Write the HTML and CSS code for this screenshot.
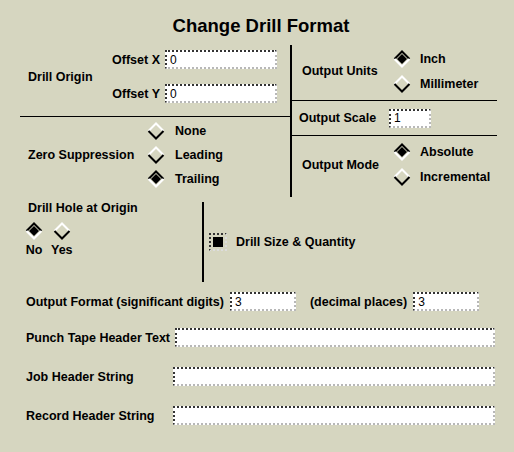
FILE: index.html
```html
<!DOCTYPE html>
<html>
<head>
    <title>Change Drill Format</title>
    <link rel="stylesheet" href="styles.css">
</head>
<body>
    <div class="dialog">
        <h1 class="title">Change Drill Format</h1>

        <div class="top">
            <!-- left column: origin + zero suppression -->
            <div class="col-left">
                <div class="origin">
                    <span class="origin-lbl">Drill Origin</span>
                    <span class="sub-lbl">Offset X</span>
                    <input class="field w-offset" type="text" value="0">
                    <span class="sub-lbl">Offset Y</span>
                    <input class="field w-offset" type="text" value="0">
                </div>
                <div class="zero">
                    <span class="zero-lbl">Zero Suppression</span>
                    <div class="radios">
                        <div class="radio">
                            <svg class="dia" viewBox="0 0 18 18" width="18" height="18"><path class="hi" d="M1.5 9L9 1.5L16.5 9"/><path class="lo" d="M1.5 9L9 16.5L16.5 9"/></svg>
                            <span>None</span>
                        </div>
                        <div class="radio">
                            <svg class="dia" viewBox="0 0 18 18" width="18" height="18"><path class="hi" d="M1.5 9L9 1.5L16.5 9"/><path class="lo" d="M1.5 9L9 16.5L16.5 9"/></svg>
                            <span>Leading</span>
                        </div>
                        <div class="radio">
                            <svg class="dia" viewBox="0 0 18 18" width="18" height="18"><path class="lo" d="M1.5 9L9 1.5L16.5 9"/><path class="hi" d="M1.5 9L9 16.5L16.5 9"/><path class="dot" d="M4 9L9 4L14 9L9 14Z"/></svg>
                            <span>Trailing</span>
                        </div>
                    </div>
                </div>
            </div>

            <!-- right column: units, scale, mode -->
            <div class="col-right">
                <div class="units">
                    <span class="sec-lbl">Output Units</span>
                    <div class="radios rows-25">
                        <div class="radio">
                            <svg class="dia" viewBox="0 0 18 18" width="18" height="18"><path class="lo" d="M1.5 9L9 1.5L16.5 9"/><path class="hi" d="M1.5 9L9 16.5L16.5 9"/><path class="dot" d="M4 9L9 4L14 9L9 14Z"/></svg>
                            <span>Inch</span>
                        </div>
                        <div class="radio">
                            <svg class="dia" viewBox="0 0 18 18" width="18" height="18"><path class="hi" d="M1.5 9L9 1.5L16.5 9"/><path class="lo" d="M1.5 9L9 16.5L16.5 9"/></svg>
                            <span>Millimeter</span>
                        </div>
                    </div>
                </div>
                <div class="scale">
                    <span class="scale-lbl">Output Scale</span>
                    <input class="field w-scale" type="text" value="1">
                </div>
                <div class="mode">
                    <span class="sec-lbl">Output Mode</span>
                    <div class="radios rows-25">
                        <div class="radio">
                            <svg class="dia" viewBox="0 0 18 18" width="18" height="18"><path class="lo" d="M1.5 9L9 1.5L16.5 9"/><path class="hi" d="M1.5 9L9 16.5L16.5 9"/><path class="dot" d="M4 9L9 4L14 9L9 14Z"/></svg>
                            <span>Absolute</span>
                        </div>
                        <div class="radio">
                            <svg class="dia" viewBox="0 0 18 18" width="18" height="18"><path class="hi" d="M1.5 9L9 1.5L16.5 9"/><path class="lo" d="M1.5 9L9 16.5L16.5 9"/></svg>
                            <span>Incremental</span>
                        </div>
                    </div>
                </div>
            </div>
        </div>

        <div class="mid">
            <div class="hole">
                <div class="hole-lbl">Drill Hole at Origin</div>
                <div class="hole-opts">
                    <div class="opt">
                        <svg class="dia" viewBox="0 0 18 18" width="18" height="18"><path class="lo" d="M1.5 9L9 1.5L16.5 9"/><path class="hi" d="M1.5 9L9 16.5L16.5 9"/><path class="dot" d="M4 9L9 4L14 9L9 14Z"/></svg>
                        <span>No</span>
                    </div>
                    <div class="opt">
                        <svg class="dia" viewBox="0 0 18 18" width="18" height="18"><path class="hi" d="M1.5 9L9 1.5L16.5 9"/><path class="lo" d="M1.5 9L9 16.5L16.5 9"/></svg>
                        <span>Yes</span>
                    </div>
                </div>
            </div>
            <div class="vsep"></div>
            <div class="toggle">
                <span class="check"></span>
                <span>Drill Size &amp; Quantity</span>
            </div>
        </div>

        <div class="rows">
            <div class="row row-format">
                <span>Output Format (significant digits)</span>
                <input class="field w-digits" type="text" value="3">
                <span class="dec-lbl">(decimal places)</span>
                <input class="field w-digits" type="text" value="3">
            </div>
            <div class="row">
                <span>Punch Tape Header Text</span>
                <input class="field wide" type="text" value="">
            </div>
            <div class="row">
                <span class="str-lbl">Job Header String</span>
                <input class="field wide" type="text" value="">
            </div>
            <div class="row">
                <span class="str-lbl">Record Header String</span>
                <input class="field wide" type="text" value="">
            </div>
        </div>
    </div>
</body>
</html>
```

FILE: styles.css
```css
body {
    margin: 0;
    background-color: #d6d6c0;
    color: #000;
    font-family: "Liberation Sans", Arial, sans-serif;
    font-size: 12.5px;
    font-weight: bold;
    line-height: 14px;
}
.dialog {
    width: 514px;
    height: 452px;
}
.title {
    margin: 0;
    padding: 15px 0 0 8px;
    height: 30px;
    text-align: center;
    font-size: 18.5px;
    line-height: 22px;
    font-weight: bold;
}

/* text fields */
.field {
    box-sizing: border-box;
    height: 19px;
    margin: 0;
    padding: 0 3px;
    border: 2px dotted;
    border-color: #333 #b8b8b8 #b8b8b8 #333;
    background-color: #fff;
    font-family: "Liberation Sans", Arial, sans-serif;
    font-size: 12px;
    font-weight: normal;
    line-height: 14px;
    color: #000;
    outline: none;
}
.w-offset { width: 112px; }
.w-scale { width: 42px; }
.w-digits { width: 66px; }
.wide { flex: 1; }

/* diamond radio */
.dia {
    display: block;
    flex: none;
}
.dia path {
    fill: none;
    stroke-width: 2;
}
.dia .hi { stroke: #fff; }
.dia .lo { stroke: #000; }
.dia .dot { fill: #000; stroke: none; }

.radios {
    display: flex;
    flex-direction: column;
}
.radio {
    display: flex;
    align-items: center;
    gap: 10px;
    height: 24px;
}
.rows-25 .radio {
    height: 25px;
    gap: 9px;
}

/* top block */
.top {
    display: flex;
    margin-left: 20px;
    width: 477px;
    height: 152px;
}
.col-left {
    width: 270px;
    border-right: 2px solid #000;
    display: flex;
    flex-direction: column;
}
.origin {
    display: grid;
    grid-template-columns: 80px 57px 112px;
    row-gap: 15px;
    align-content: start;
    align-items: center;
    height: 66px;
    padding: 5px 0 0 8px;
    border-bottom: 1px solid #000;
}
.origin-lbl {
    grid-row: 1 / 3;
    grid-column: 1;
}
.sub-lbl {
    justify-self: end;
    padding-right: 5px;
}
.zero {
    flex: 1;
    display: flex;
    align-items: center;
    padding: 0 0 4px 8px;
}
.zero-lbl {
    width: 119px;
}

.col-right {
    flex: 1;
    display: flex;
    flex-direction: column;
}
.units {
    display: flex;
    align-items: center;
    padding: 1px 0 4px 10px;
    border-bottom: 1px solid #000;
}
.sec-lbl {
    width: 91px;
}
.scale {
    display: flex;
    align-items: center;
    height: 34px;
    padding-left: 7px;
    border-bottom: 1px solid #000;
}
.scale-lbl {
    width: 90px;
}
.mode {
    flex: 1;
    display: flex;
    align-items: center;
    padding: 0 0 4px 10px;
}

/* middle block */
.mid {
    display: flex;
    margin-left: 20px;
    height: 87px;
}
.hole {
    width: 182px;
}
.hole-lbl {
    margin: 4px 0 0 8px;
}
.hole-opts {
    display: flex;
    gap: 8px;
    margin: 7px 0 0 5px;
}
.opt {
    display: flex;
    flex-direction: column;
    align-items: center;
    gap: 3px;
    min-width: 18px;
}
.vsep {
    width: 2px;
    background-color: #000;
    margin: 5px 0 2px;
}
.toggle {
    display: flex;
    align-items: center;
    gap: 9px;
    margin-left: 5px;
    padding-top: 3px;
}
.check {
    box-sizing: border-box;
    width: 18px;
    height: 18px;
    border: 2px dotted;
    border-color: #333 #ddd #ddd #333;
    display: flex;
    align-items: center;
    justify-content: center;
}
.check::after {
    content: "";
    width: 10px;
    height: 10px;
    background-color: #000;
}

/* bottom rows */
.rows {
    display: flex;
    flex-direction: column;
    gap: 20px;
    margin: 8px 19px 0 26px;
}
.row {
    display: flex;
    align-items: center;
    gap: 5px;
}
.row-format {
    gap: 6px;
    margin-bottom: -3px;
}
.dec-lbl {
    margin-left: 8px;
}
.str-lbl {
    width: 142px;
}
```
